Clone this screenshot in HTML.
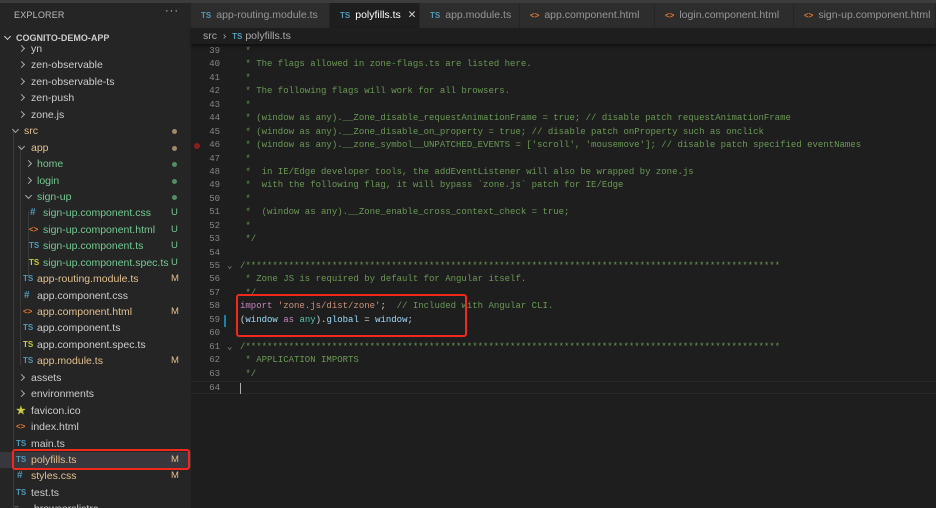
<!DOCTYPE html>
<html><head><meta charset="utf-8"><style>
*{margin:0;padding:0;box-sizing:border-box}
body{width:936px;height:508px;overflow:hidden;background:#1e1e1e;font-family:"Liberation Sans",sans-serif;position:relative}
#top{position:absolute;left:0;top:0;width:936px;height:3px;background:#3c3c3c}
#side{position:absolute;left:0;top:3px;width:191px;height:505px;background:#252526;overflow:hidden}
.hdr{position:absolute;left:14px;top:7px;font-size:9px;color:#bbb;letter-spacing:.2px}
.dots{position:absolute;left:165px;top:2px;color:#ccc;font-size:11px;letter-spacing:1px}
.proj{position:absolute;left:0;top:27px;width:191px;height:16px;font-size:9px;font-weight:bold;color:#ccc;line-height:16px;padding-left:16px}
.proj:before{content:"";position:absolute;left:5px;top:4px;width:4px;height:4px;border-right:1px solid #ccc;border-bottom:1px solid #ccc;transform:rotate(45deg)}
#rows{position:absolute;left:0;top:38px;width:191px}
.r{position:relative;height:16.44px;line-height:16.44px;font-size:10.5px;color:#ccc;white-space:nowrap}
.r span.t{position:absolute}
.ch{position:absolute;top:5px;width:5px;height:5px;border-right:1px solid #aaa;border-bottom:1px solid #aaa;transform:rotate(-45deg)}
.ch.o{transform:rotate(45deg);top:4px}
.ic{position:absolute;font-size:8px;font-weight:bold}
.ts{color:#519aba}.tsy{color:#cbcb41}.hash{color:#519aba;font-size:10px}.htm{color:#e37933}
.g{color:#73c991}.m{color:#e2c08d}
.b{position:absolute;left:171px;font-size:9.5px}
.dot{position:absolute;left:172px;top:6px;width:5px;height:5px;border-radius:50%}
.sel{background:#37373d}
.guide{position:absolute;width:1px;background:#3b3b3b}
#tabs{position:absolute;left:191px;top:3px;width:745px;height:25px;background:#252526}
.tab{position:absolute;top:0;height:25px;background:#2d2d2d;border-right:1px solid #252526;font-size:10.5px;color:#969696;line-height:25px;padding-left:10px;white-space:nowrap}
.tab.a{background:#1e1e1e;color:#fff}
.tab .ti{font-size:8px;font-weight:bold;margin-right:5px}
#bc{position:absolute;left:191px;top:28px;width:745px;height:16px;font-size:10.5px;color:#aaa;line-height:16px;padding-left:12px;box-shadow:0 2px 3px rgba(0,0,0,.5);background:#1e1e1e;z-index:2}
#code{position:absolute;left:191px;top:45px;width:745px}
.l{position:relative;height:13.44px;line-height:13.44px;font-family:"Liberation Mono",monospace;font-size:9px;white-space:pre}
.n{position:absolute;left:0;width:29px;text-align:right;color:#858585}
.c{position:absolute;left:49px;color:#6a9955}
.k{color:#c586c0}.s{color:#ce9178}.v{color:#9cdcfe}.ty{color:#4ec9b0}.p{color:#d4d4d4}
.box{position:absolute;border:2px solid #f0291c;border-radius:3px}
</style></head><body>
<div id="top"></div>
<div id="side">
<div class="hdr">EXPLORER</div><div class="dots">···</div>
<div class="proj">COGNITO-DEMO-APP</div>
<div class="guide" style="left:13px;top:126px;height:380px"></div>
<div class="guide" style="left:20px;top:142px;height:220px"></div>
<div class="guide" style="left:28px;top:208px;height:66px"></div>
<div id="rows">
<div class="r"><i class="ch" style="left:19px"></i><span class="t" style="left:31px">yn</span></div>
<div class="r"><i class="ch" style="left:19px"></i><span class="t" style="left:31px">zen-observable</span></div>
<div class="r"><i class="ch" style="left:19px"></i><span class="t" style="left:31px">zen-observable-ts</span></div>
<div class="r"><i class="ch" style="left:19px"></i><span class="t" style="left:31px">zen-push</span></div>
<div class="r"><i class="ch" style="left:19px"></i><span class="t" style="left:31px">zone.js</span></div>
<div class="r"><i class="ch o" style="left:13px"></i><span class="t m" style="left:24px">src</span><i class="dot" style="background:#a08a6a"></i></div>
<div class="r"><i class="ch o" style="left:19px"></i><span class="t m" style="left:31px">app</span><i class="dot" style="background:#a08a6a"></i></div>
<div class="r"><i class="ch" style="left:26px"></i><span class="t g" style="left:37px">home</span><i class="dot" style="background:#4f8f65"></i></div>
<div class="r"><i class="ch" style="left:26px"></i><span class="t g" style="left:37px">login</span><i class="dot" style="background:#4f8f65"></i></div>
<div class="r"><i class="ch o" style="left:26px"></i><span class="t g" style="left:37px">sign-up</span><i class="dot" style="background:#4f8f65"></i></div>
<div class="r"><span class="ic hash" style="left:30px">#</span><span class="t g" style="left:43px">sign-up.component.css</span><span class="b g">U</span></div>
<div class="r"><span class="ic htm" style="left:29px">&lt;&gt;</span><span class="t g" style="left:43px">sign-up.component.html</span><span class="b g">U</span></div>
<div class="r"><span class="ic ts" style="left:29px">TS</span><span class="t g" style="left:43px">sign-up.component.ts</span><span class="b g">U</span></div>
<div class="r"><span class="ic tsy" style="left:29px">TS</span><span class="t g" style="left:43px">sign-up.component.spec.ts</span><span class="b g">U</span></div>
<div class="r"><span class="ic ts" style="left:23px">TS</span><span class="t m" style="left:37px">app-routing.module.ts</span><span class="b m">M</span></div>
<div class="r"><span class="ic hash" style="left:24px">#</span><span class="t" style="left:37px">app.component.css</span></div>
<div class="r"><span class="ic htm" style="left:23px">&lt;&gt;</span><span class="t m" style="left:37px">app.component.html</span><span class="b m">M</span></div>
<div class="r"><span class="ic ts" style="left:23px">TS</span><span class="t" style="left:37px">app.component.ts</span></div>
<div class="r"><span class="ic tsy" style="left:23px">TS</span><span class="t" style="left:37px">app.component.spec.ts</span></div>
<div class="r"><span class="ic ts" style="left:23px">TS</span><span class="t m" style="left:37px">app.module.ts</span><span class="b m">M</span></div>
<div class="r"><i class="ch" style="left:19px"></i><span class="t" style="left:31px">assets</span></div>
<div class="r"><i class="ch" style="left:19px"></i><span class="t" style="left:31px">environments</span></div>
<div class="r"><span class="ic" style="left:16px;color:#cbcb41;font-size:11px">★</span><span class="t" style="left:31px">favicon.ico</span></div>
<div class="r"><span class="ic htm" style="left:16px">&lt;&gt;</span><span class="t" style="left:31px">index.html</span></div>
<div class="r"><span class="ic ts" style="left:16px">TS</span><span class="t" style="left:31px">main.ts</span></div>
<div class="r sel"><span class="ic ts" style="left:16px">TS</span><span class="t m" style="left:31px">polyfills.ts</span><span class="b m">M</span></div>
<div class="r"><span class="ic hash" style="left:17px">#</span><span class="t m" style="left:31px">styles.css</span><span class="b m">M</span></div>
<div class="r"><span class="ic ts" style="left:16px">TS</span><span class="t" style="left:31px">test.ts</span></div>
<div class="r"><span class="ic" style="left:14px;color:#aaa">≡</span><span class="t" style="left:31px">.browserslistrc</span></div>
</div>
</div>
<div class="box" style="left:12px;top:449px;width:178px;height:21px"></div>
<div id="tabs">
<div class="tab" style="left:0;width:139px"><span class="ti ts">TS</span>app-routing.module.ts</div>
<div class="tab a" style="left:139px;width:90px"><span class="ti ts">TS</span>polyfills.ts <span style="color:#ccc;margin-left:4px">✕</span></div>
<div class="tab" style="left:229px;width:100px"><span class="ti ts">TS</span>app.module.ts</div>
<div class="tab" style="left:329px;width:135px"><span class="ti htm">&lt;&gt;</span>app.component.html</div>
<div class="tab" style="left:464px;width:139px"><span class="ti htm">&lt;&gt;</span>login.component.html</div>
<div class="tab" style="left:603px;width:142px"><span class="ti htm">&lt;&gt;</span>sign-up.component.html</div>
</div>
<div id="bc">src &nbsp;›&nbsp; <span style="color:#519aba;font-size:8px;font-weight:bold">TS</span> polyfills.ts</div>
<div id="code">
<div class="l"><span class="n">39</span><span class="c"> *</span></div>
<div class="l"><span class="n">40</span><span class="c"> * The flags allowed in zone-flags.ts are listed here.</span></div>
<div class="l"><span class="n">41</span><span class="c"> *</span></div>
<div class="l"><span class="n">42</span><span class="c"> * The following flags will work for all browsers.</span></div>
<div class="l"><span class="n">43</span><span class="c"> *</span></div>
<div class="l"><span class="n">44</span><span class="c"> * (window as any).__Zone_disable_requestAnimationFrame = true; // disable patch requestAnimationFrame</span></div>
<div class="l"><span class="n">45</span><span class="c"> * (window as any).__Zone_disable_on_property = true; // disable patch onProperty such as onclick</span></div>
<div class="l"><span class="n">46</span><span style="position:absolute;left:3px;top:4px;width:6px;height:6px;border-radius:50%;background:#8b1d1d"></span><span class="c"> * (window as any).__zone_symbol__UNPATCHED_EVENTS = ['scroll', 'mousemove']; // disable patch specified eventNames</span></div>
<div class="l"><span class="n">47</span><span class="c"> *</span></div>
<div class="l"><span class="n">48</span><span class="c"> *  in IE/Edge developer tools, the addEventListener will also be wrapped by zone.js</span></div>
<div class="l"><span class="n">49</span><span class="c"> *  with the following flag, it will bypass `zone.js` patch for IE/Edge</span></div>
<div class="l"><span class="n">50</span><span class="c"> *</span></div>
<div class="l"><span class="n">51</span><span class="c"> *  (window as any).__Zone_enable_cross_context_check = true;</span></div>
<div class="l"><span class="n">52</span><span class="c"> *</span></div>
<div class="l"><span class="n">53</span><span class="c"> */</span></div>
<div class="l"><span class="n">54</span></div>
<div class="l"><span class="n">55</span><span style="position:absolute;left:36px;color:#888">⌄</span><span class="c">/***************************************************************************************************</span></div>
<div class="l"><span class="n">56</span><span class="c"> * Zone JS is required by default for Angular itself.</span></div>
<div class="l"><span class="n">57</span><span class="c"> */</span></div>
<div class="l"><span class="n">58</span><span class="c"><span class="k">import</span> <span class="s">'zone.js/dist/zone'</span><span class="p">;</span>  // Included with Angular CLI.</span></div>
<div class="l"><span class="n">59</span><span style="position:absolute;left:33px;top:1px;width:2px;height:12px;background:#1b81a8"></span><span class="c p">(<span class="v">window</span> <span class="k">as</span> <span class="ty">any</span>).<span class="v">global</span> = <span class="v">window</span>;</span></div>
<div class="l"><span class="n">60</span></div>
<div class="l"><span class="n">61</span><span style="position:absolute;left:36px;color:#888">⌄</span><span class="c">/***************************************************************************************************</span></div>
<div class="l"><span class="n">62</span><span class="c"> * APPLICATION IMPORTS</span></div>
<div class="l"><span class="n">63</span><span class="c"> */</span></div>
<div class="l" style="border-top:1px solid #282828;border-bottom:1px solid #282828"><span class="n">64</span><span style="position:absolute;left:49px;top:1px;width:1px;height:11px;background:#aeafad"></span></div>
</div>
<div class="box" style="left:236px;top:294px;width:231px;height:43px"></div>
</body></html>
